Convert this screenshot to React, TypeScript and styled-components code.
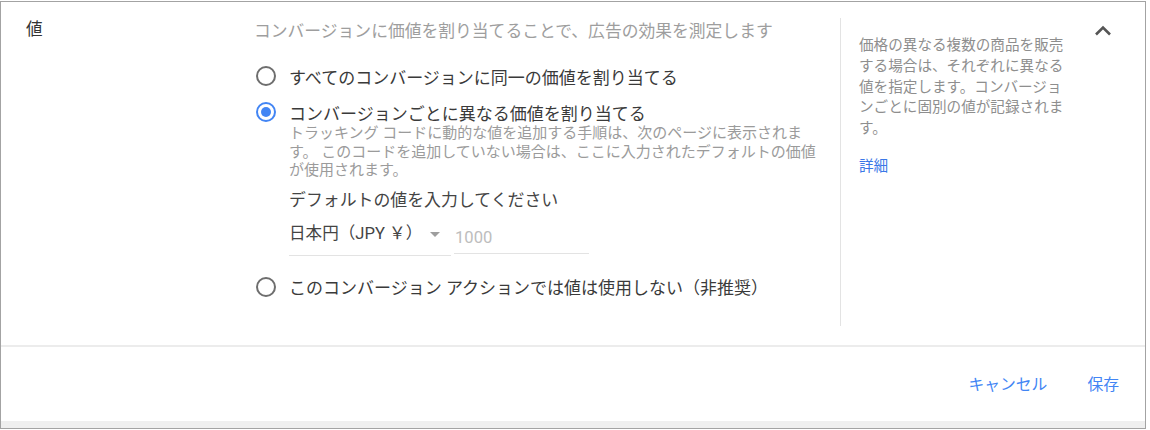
import React, { useState } from "react";
import styled, { createGlobalStyle } from "styled-components";

const GlobalStyle = createGlobalStyle`
  html, body {
    margin: 0;
    padding: 0;
    background: #fff;
  }
  body {
    font-family: Roboto, "Noto Sans CJK JP", sans-serif;
  }
`;

const Frame = styled.div`
  box-sizing: border-box;
  width: 1146px;
  height: 428px;
  margin: 1px 0 0 0;
  border: 1px solid #a3a3a3;
  background: linear-gradient(to bottom, #8e8e8e 0px, #cfcfcf 3px, #efefef 7px);
  display: flex;
  flex-direction: column;
`;

const Card = styled.div`
  height: 419px;
  background: #fff;
  display: flex;
  flex-direction: column;
`;

const Content = styled.div`
  display: flex;
  height: 343px;
`;

const LabelCol = styled.div`
  width: 228px;
  padding: 18px 0 0 25px;
  font-size: 16.6px;
  line-height: 20px;
  color: #333;
`;

const MainCol = styled.div`
  box-sizing: border-box;
  width: 587px;
  height: 308px;
  margin-top: 16px;
  padding-top: 3px;
  border-right: 1px solid #e3e3e3;
  display: flex;
  flex-direction: column;
`;

const Lead = styled.div`
  font-size: 16.8px;
  line-height: 20px;
  color: #9e9e9e;
  white-space: nowrap;
`;

const Options = styled.div`
  display: flex;
  flex-direction: column;
  margin-top: 23px;
`;

const OptionRow = styled.label<{ $gap?: number }>`
  display: flex;
  align-items: center;
  height: 24px;
  margin-top: ${(p) => p.$gap ?? 0}px;
  cursor: pointer;
  font-size: 17px;
  color: #3a3a3a;
  white-space: nowrap;
`;

const Radio = styled.span<{ $checked: boolean }>`
  box-sizing: border-box;
  width: 20px;
  height: 20px;
  margin: 0 13px 0 2px;
  border-radius: 50%;
  border: 2px solid ${(p) => (p.$checked ? "#4285f4" : "#6e6e6e")};
  display: flex;
  align-items: center;
  justify-content: center;

  &::after {
    content: "";
    width: 10px;
    height: 10px;
    border-radius: 50%;
    background: #4285f4;
    display: ${(p) => (p.$checked ? "block" : "none")};
  }
`;

const Nested = styled.div`
  padding-left: 35px;
  display: flex;
  flex-direction: column;
`;

const Helper = styled.div`
  width: 538px;
  font-size: 15px;
  line-height: 18.5px;
  color: #9b9b9b;
`;

const FieldLabel = styled.div`
  margin-top: 9px;
  font-size: 16.9px;
  line-height: 22px;
  color: #444;
`;

const FieldRow = styled.div`
  display: flex;
  align-items: flex-start;
  margin-top: 2px;
`;

const Select = styled.div`
  box-sizing: border-box;
  width: 162px;
  height: 43px;
  padding-top: 10px;
  border-bottom: 1px solid #e3e3e3;
  display: flex;
  align-items: flex-start;
  font-size: 16.6px;
  line-height: 22px;
  color: #444;
`;

const SelectText = styled.span`
  flex: 1;
  white-space: nowrap;
`;

const Caret = styled.span`
  width: 0;
  height: 0;
  margin: 9px 11px 0 0;
  border-left: 5px solid transparent;
  border-right: 5px solid transparent;
  border-top: 5px solid #9e9e9e;
`;

const AmountInput = styled.input`
  box-sizing: border-box;
  width: 135px;
  height: 41px;
  margin-left: 3px;
  padding: 10px 0 0 1px;
  border: none;
  border-bottom: 1px solid #e3e3e3;
  outline: none;
  font-family: Roboto, "Noto Sans CJK JP", sans-serif;
  font-size: 16.6px;
  line-height: 22px;
  color: #444;
  background: transparent;

  &::placeholder {
    color: #bdbdbd;
  }
`;

const SideCol = styled.div`
  width: 232px;
  padding: 33px 0 0 18px;
`;

const SideText = styled.div`
  width: 206px;
  font-size: 14.6px;
  line-height: 20.8px;
  color: #8e8e8e;
`;

const SideLink = styled.a`
  display: block;
  margin-top: 17px;
  font-size: 14.6px;
  line-height: 21px;
  color: #3b78e7;
  text-decoration: none;
`;

const ToggleCol = styled.div`
  padding-top: 17px;
`;

const ToggleButton = styled.button`
  width: 24px;
  height: 24px;
  padding: 0;
  border: none;
  background: none;
  cursor: pointer;
  display: flex;
`;

const Divider = styled.div`
  height: 2px;
  background: #ececec;
`;

const Footer = styled.div`
  flex: 1;
  display: flex;
  align-items: center;
  justify-content: flex-end;
  gap: 40px;
  padding: 2px 26px 0 0;
`;

const TextButton = styled.button`
  padding: 0;
  border: none;
  background: none;
  cursor: pointer;
  font-family: Roboto, "Noto Sans CJK JP", sans-serif;
  font-size: 15.8px;
  line-height: 20px;
  color: #4285f4;
`;

type Choice = "same" | "each" | "none";

export default function App() {
  const [choice, setChoice] = useState<Choice>("each");

  return (
    <>
      <GlobalStyle />
      <Frame>
        <Card>
          <Content>
            <LabelCol>値</LabelCol>
            <MainCol>
              <Lead>コンバージョンに価値を割り当てることで、広告の効果を測定します</Lead>
              <Options>
                <OptionRow onClick={() => setChoice("same")}>
                  <Radio $checked={choice === "same"} />
                  すべてのコンバージョンに同一の価値を割り当てる
                </OptionRow>
                <OptionRow $gap={12} onClick={() => setChoice("each")}>
                  <Radio $checked={choice === "each"} />
                  コンバージョンごとに異なる価値を割り当てる
                </OptionRow>
                <Nested>
                  <Helper>
                    トラッキング コードに動的な値を追加する手順は、次のページに表示されます。
                    このコードを追加していない場合は、ここに入力されたデフォルトの価値が使用されます。
                  </Helper>
                  <FieldLabel>デフォルトの値を入力してください</FieldLabel>
                  <FieldRow>
                    <Select>
                      <SelectText>日本円（JPY ￥）</SelectText>
                      <Caret />
                    </Select>
                    <AmountInput placeholder="1000" />
                  </FieldRow>
                </Nested>
                <OptionRow $gap={19} onClick={() => setChoice("none")}>
                  <Radio $checked={choice === "none"} />
                  このコンバージョン アクションでは値は使用しない（非推奨）
                </OptionRow>
              </Options>
            </MainCol>
            <SideCol>
              <SideText>
                価格の異なる複数の商品を販売する場合は、それぞれに異なる値を指定します。コンバージョンごとに固別の値が記録されます。
              </SideText>
              <SideLink href="#">詳細</SideLink>
            </SideCol>
            <ToggleCol>
              <ToggleButton aria-label="折りたたむ">
                <svg width="24" height="24" viewBox="0 0 24 24">
                  <path d="M5 15.5 L12 8.5 L19 15.5" fill="none" stroke="#555" strokeWidth="2.6" />
                </svg>
              </ToggleButton>
            </ToggleCol>
          </Content>
          <Divider />
          <Footer>
            <TextButton>キャンセル</TextButton>
            <TextButton>保存</TextButton>
          </Footer>
        </Card>
      </Frame>
    </>
  );
}
